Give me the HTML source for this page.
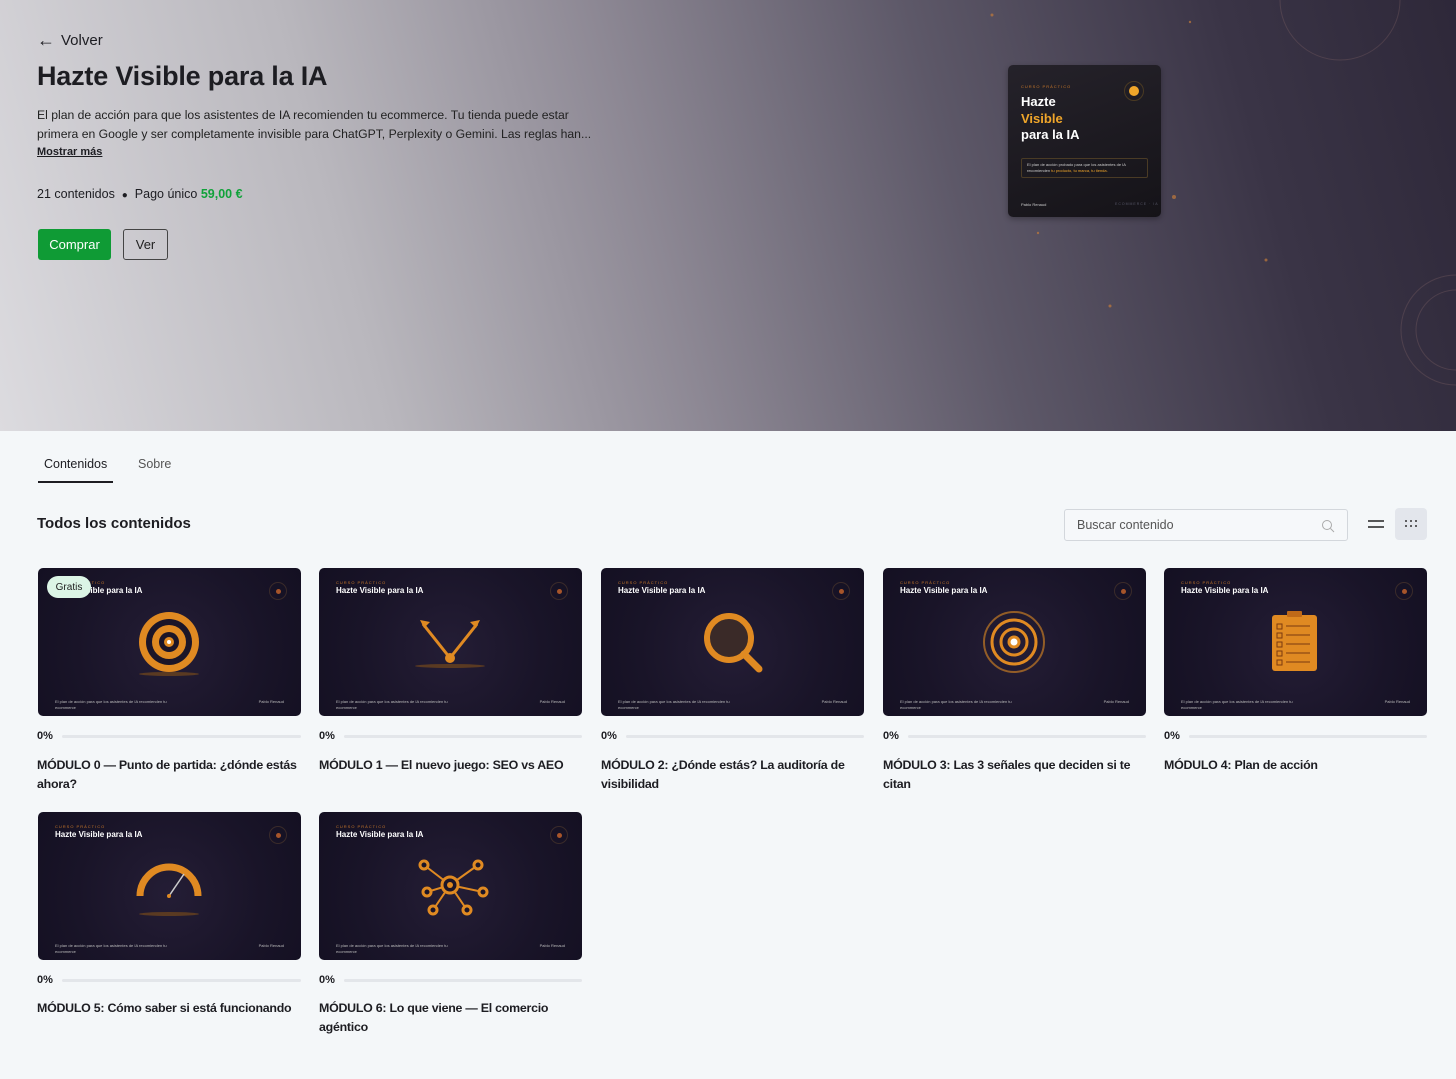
<!DOCTYPE html>
<html><head><meta charset="utf-8"><style>
*{box-sizing:border-box;margin:0;padding:0}
body{width:1456px;height:1079px;overflow:hidden;background:#f4f7f9;font-family:"Liberation Sans",sans-serif;color:#1d1d22;position:relative}
.hero{position:absolute;left:0;top:0;width:1456px;height:431px;background:linear-gradient(75deg,#dcdbdf 0%,#b9b7bd 25%,#8d8894 45%,#5d5868 65%,#3a3446 85%,#2e2839 100%)}
.abs{position:absolute}
.btn{position:absolute;border-radius:3px;font-size:13px;display:flex;align-items:center;justify-content:center}
.card{position:absolute;width:263px;height:148px;border-radius:5px;background:radial-gradient(circle at 50% 55%,#241d35 0%,#191428 60%,#141022 100%);overflow:hidden}
.card .k{position:absolute;left:17px;top:12px;font-size:4px;letter-spacing:1px;color:#c8772a}
.card .t{position:absolute;left:17px;top:18px;font-size:8px;font-weight:bold;color:#fff}
.card .d{position:absolute;left:17px;top:131px;font-size:4px;color:#bbb;line-height:6px;width:120px}
.card .a{position:absolute;right:17px;top:131px;font-size:4px;color:#bbb}
.card .r{position:absolute;right:14px;top:14px;width:18px;height:18px;border-radius:50%;border:1px solid #3a2b2a}
.card .r:after{content:"";position:absolute;left:6px;top:6px;width:5px;height:5px;border-radius:50%;background:#a7552a}
.card svg{position:absolute;left:0;top:0}
.pct{position:absolute;font-size:11px;font-weight:bold}
.bar{position:absolute;height:3px;background:#e3e6ea;border-radius:2px}
.ttl{position:absolute;font-size:12.4px;line-height:18.5px;font-weight:bold;color:#1d1d22;width:275px;letter-spacing:-0.25px}
</style></head><body>
<div class="hero">
 <svg class="abs" style="left:0;top:0" width="1456" height="431"><g fill="#c27a3a" opacity=".7"><circle cx="992" cy="15" r="1.5"/><circle cx="1174" cy="197" r="2"/><circle cx="1266" cy="260" r="1.5"/><circle cx="1110" cy="306" r="1.5"/><circle cx="1038" cy="233" r="1.2"/><circle cx="1190" cy="22" r="1.2"/></g><g fill="none" stroke="#8a6a6a" opacity=".3"><circle cx="1456" cy="330" r="40"/><circle cx="1456" cy="330" r="55"/><circle cx="1340" cy="0" r="60"/></g></svg>
 <div class="abs" style="left:37px;top:30px;font-size:15px;display:flex;align-items:center;gap:6px"><span style="font-size:18px">←</span>Volver</div>
 <div class="abs" style="left:37px;top:61px;font-size:27px;font-weight:bold;color:#1d1d22;letter-spacing:-0.2px">Hazte Visible para la IA</div>
 <div class="abs" style="left:37px;top:106px;width:570px;font-size:12.2px;line-height:18.5px;color:#222">El plan de acción para que los asistentes de IA recomienden tu ecommerce. Tu tienda puede estar primera en Google y ser completamente invisible para ChatGPT, Perplexity o Gemini. Las reglas han...</div>
 <div class="abs" style="left:37px;top:146px;font-size:11px;font-weight:bold;text-decoration:underline">Mostrar más</div>
 <div class="abs" style="left:37px;top:187px;font-size:12.5px">21 contenidos &nbsp;<span style="font-size:10px">●</span>&nbsp; Pago único <b style="color:#10a23a">59,00 €</b></div>
 <div class="btn" style="left:38px;top:229px;width:73px;height:31px;background:#0f9b35;color:#fff">Comprar</div>
 <div class="btn" style="left:123px;top:229px;width:45px;height:31px;border:1px solid #444;color:#222">Ver</div>
 <div class="abs" style="left:1008px;top:65px;width:153px;height:152px;border-radius:5px;background:linear-gradient(160deg,#25222a,#151318);box-shadow:0 2px 6px rgba(0,0,0,.3)">
  <div class="abs" style="left:13px;top:19px;font-size:4px;letter-spacing:1px;color:#c8772a">CURSO PRÁCTICO</div>
  <div class="abs" style="left:13px;top:29px;font-size:13px;font-weight:bold;line-height:16.5px;color:#fff">Hazte<br><span style="color:#f0a62a">Visible</span><br>para la IA</div>
  <div class="abs" style="left:116px;top:16px;width:20px;height:20px;border-radius:50%;border:1px solid #4a3a22"></div>
  <div class="abs" style="left:121px;top:21px;width:10px;height:10px;border-radius:50%;background:#f0a62a"></div>
  <div class="abs" style="left:13px;top:93px;width:127px;height:20px;border:1px solid #4a3b25;border-radius:2px;font-size:4px;color:#ccc;padding:3px 5px;line-height:6px">El plan de acción probado para que los asistentes de IA recomienden <span style="color:#f0a62a">tu producto, tu marca, tu tienda.</span></div>
  <div class="abs" style="left:13px;top:137px;font-size:4px;color:#ccc">Pablo Renaud</div>
  <div class="abs" style="left:107px;top:137px;font-size:3.5px;color:#556;letter-spacing:1px">ECOMMERCE · IA</div>
 </div>
</div>
<div class="abs" style="left:44px;top:457px;font-size:12.5px">Contenidos</div>
<div class="abs" style="left:38px;top:481px;width:75px;height:2px;background:#1d1d22"></div>
<div class="abs" style="left:138px;top:457px;font-size:12.5px;color:#555">Sobre</div>
<div class="abs" style="left:37px;top:515px;font-size:15px;font-weight:bold">Todos los contenidos</div>
<div class="abs" style="left:1064px;top:509px;width:284px;height:32px;border:1px solid #d3d7dc;border-radius:3px;background:#f6f8fa;font-size:12.5px;color:#555;padding:8px 12px">Buscar contenido
 <svg class="abs" style="right:12px;top:9px" width="14" height="14"><circle cx="6" cy="6" r="4.5" fill="none" stroke="#aaa"/><path d="M9.5 9.5L13 13" stroke="#aaa"/></svg></div>
<svg class="abs" style="left:1368px;top:519px" width="16" height="10"><path d="M0 2H16M0 8H16" stroke="#222" stroke-width="1.6"/></svg>
<div class="abs" style="left:1395px;top:508px;width:32px;height:32px;border-radius:4px;background:#e3e6ec"></div>
<svg class="abs" style="left:1404px;top:519px" width="14" height="10" fill="#333"><circle cx="2" cy="2" r="1"/><circle cx="7" cy="2" r="1"/><circle cx="12" cy="2" r="1"/><circle cx="2" cy="7" r="1"/><circle cx="7" cy="7" r="1"/><circle cx="12" cy="7" r="1"/></svg>

<div class="card" style="left:38px;top:568px"><div class="k">CURSO PRÁCTICO</div><div class="t">Hazte Visible para la IA</div><div class="r"></div>
<svg width="263" height="148"><ellipse cx="131" cy="106" rx="30" ry="2" fill="#5a3a22"/><circle cx="131" cy="74" r="30" fill="#e08a22"/><circle cx="131" cy="74" r="23" fill="#1b1528"/><circle cx="131" cy="74" r="17" fill="#e08a22"/><circle cx="131" cy="74" r="10" fill="#1b1528"/><circle cx="131" cy="74" r="5" fill="#e08a22"/><circle cx="131" cy="74" r="2" fill="#fff"/></svg>
<div class="d">El plan de acción para que los asistentes de IA recomienden tu ecommerce</div><div class="a">Pablo Renaud</div>
<div class="abs" style="left:9px;top:8px;width:44px;height:22px;border-radius:11px;background:#dcf5e6;font-size:10px;color:#222;display:flex;align-items:center;justify-content:center">Gratis</div></div>
<div class="card" style="left:319px;top:568px"><div class="k">CURSO PRÁCTICO</div><div class="t">Hazte Visible para la IA</div><div class="r"></div>
<svg width="263" height="148"><ellipse cx="131" cy="98" rx="35" ry="2" fill="#5a3a22"/><path d="M131 90L104 56M131 90L158 56" stroke="#e08a22" stroke-width="3" fill="none"/><path d="M101 52l10 2-6 6zM161 52l-10 2 6 6z" fill="#e08a22"/><circle cx="131" cy="90" r="5" fill="#e08a22"/></svg>
<div class="d">El plan de acción para que los asistentes de IA recomienden tu ecommerce</div><div class="a">Pablo Renaud</div></div>
<div class="card" style="left:601px;top:568px"><div class="k">CURSO PRÁCTICO</div><div class="t">Hazte Visible para la IA</div><div class="r"></div>
<svg width="263" height="148"><circle cx="128" cy="70" r="22" fill="#3a2a28" stroke="#e08a22" stroke-width="6"/><path d="M143 86L158 101" stroke="#e08a22" stroke-width="7" stroke-linecap="round"/></svg>
<div class="d">El plan de acción para que los asistentes de IA recomienden tu ecommerce</div><div class="a">Pablo Renaud</div></div>
<div class="card" style="left:883px;top:568px"><div class="k">CURSO PRÁCTICO</div><div class="t">Hazte Visible para la IA</div><div class="r"></div>
<svg width="263" height="148" fill="none" stroke="#e08a22"><circle cx="131" cy="74" r="30" stroke-width="2" opacity=".6"/><circle cx="131" cy="74" r="22" stroke-width="3"/><circle cx="131" cy="74" r="13" stroke-width="3"/><circle cx="131" cy="74" r="5" fill="#fff" stroke-width="3"/></svg>
<div class="d">El plan de acción para que los asistentes de IA recomienden tu ecommerce</div><div class="a">Pablo Renaud</div></div>
<div class="card" style="left:1164px;top:568px"><div class="k">CURSO PRÁCTICO</div><div class="t">Hazte Visible para la IA</div><div class="r"></div>
<svg width="263" height="148"><rect x="108" y="47" width="45" height="56" rx="3" fill="#e08a22"/><rect x="123" y="43" width="15" height="6" rx="1" fill="#c06a18"/><g stroke="#7a3a10" fill="none"><rect x="113" y="56" width="5" height="5"/><rect x="113" y="65" width="5" height="5"/><rect x="113" y="74" width="5" height="5"/><rect x="113" y="83" width="5" height="5"/><rect x="113" y="92" width="5" height="5"/><path d="M122 58H146M122 67H146M122 76H146M122 85H146M122 94H146"/></g></svg>
<div class="d">El plan de acción para que los asistentes de IA recomienden tu ecommerce</div><div class="a">Pablo Renaud</div></div>
<div class="card" style="left:38px;top:812px"><div class="k">CURSO PRÁCTICO</div><div class="t">Hazte Visible para la IA</div><div class="r"></div>
<svg width="263" height="148"><ellipse cx="131" cy="102" rx="30" ry="2" fill="#5a3a22"/><path d="M102 84A29 29 0 0 1 160 84" fill="none" stroke="#e08a22" stroke-width="7"/><path d="M131 84L146 62" stroke="#ccc" stroke-width="1.5"/><circle cx="131" cy="84" r="2" fill="#e08a22"/></svg>
<div class="d">El plan de acción para que los asistentes de IA recomienden tu ecommerce</div><div class="a">Pablo Renaud</div></div>
<div class="card" style="left:319px;top:812px"><div class="k">CURSO PRÁCTICO</div><div class="t">Hazte Visible para la IA</div><div class="r"></div>
<svg width="263" height="148"><g stroke="#e08a22" stroke-width="2"><path d="M131 73L105 53M131 73L159 53M131 73L108 80M131 73L164 80M131 73L114 98M131 73L148 98"/></g><g fill="#1b1528" stroke="#e08a22" stroke-width="3"><circle cx="105" cy="53" r="4"/><circle cx="159" cy="53" r="4"/><circle cx="108" cy="80" r="4"/><circle cx="164" cy="80" r="4"/><circle cx="114" cy="98" r="4"/><circle cx="148" cy="98" r="4"/><circle cx="131" cy="73" r="8"/></g><circle cx="131" cy="73" r="3" fill="#e08a22"/></svg>
<div class="d">El plan de acción para que los asistentes de IA recomienden tu ecommerce</div><div class="a">Pablo Renaud</div></div>

<div class="pct" style="left:37px;top:730px">0%</div><div class="bar" style="left:62px;top:735px;width:239px"></div>
<div class="pct" style="left:319px;top:730px">0%</div><div class="bar" style="left:344px;top:735px;width:238px"></div>
<div class="pct" style="left:601px;top:730px">0%</div><div class="bar" style="left:626px;top:735px;width:238px"></div>
<div class="pct" style="left:883px;top:730px">0%</div><div class="bar" style="left:908px;top:735px;width:238px"></div>
<div class="pct" style="left:1164px;top:730px">0%</div><div class="bar" style="left:1189px;top:735px;width:238px"></div>
<div class="pct" style="left:37px;top:974px">0%</div><div class="bar" style="left:62px;top:979px;width:239px"></div>
<div class="pct" style="left:319px;top:974px">0%</div><div class="bar" style="left:344px;top:979px;width:238px"></div>

<div class="ttl" style="left:37px;top:756px">MÓDULO 0 — Punto de partida: ¿dónde estás ahora?</div>
<div class="ttl" style="left:319px;top:756px">MÓDULO 1 — El nuevo juego: SEO vs AEO</div>
<div class="ttl" style="left:601px;top:756px">MÓDULO 2: ¿Dónde estás? La auditoría de visibilidad</div>
<div class="ttl" style="left:883px;top:756px">MÓDULO 3: Las 3 señales que deciden si te citan</div>
<div class="ttl" style="left:1164px;top:756px">MÓDULO 4: Plan de acción</div>
<div class="ttl" style="left:37px;top:999px">MÓDULO 5: Cómo saber si está funcionando</div>
<div class="ttl" style="left:319px;top:999px">MÓDULO 6: Lo que viene — El comercio agéntico</div>
</body></html>
